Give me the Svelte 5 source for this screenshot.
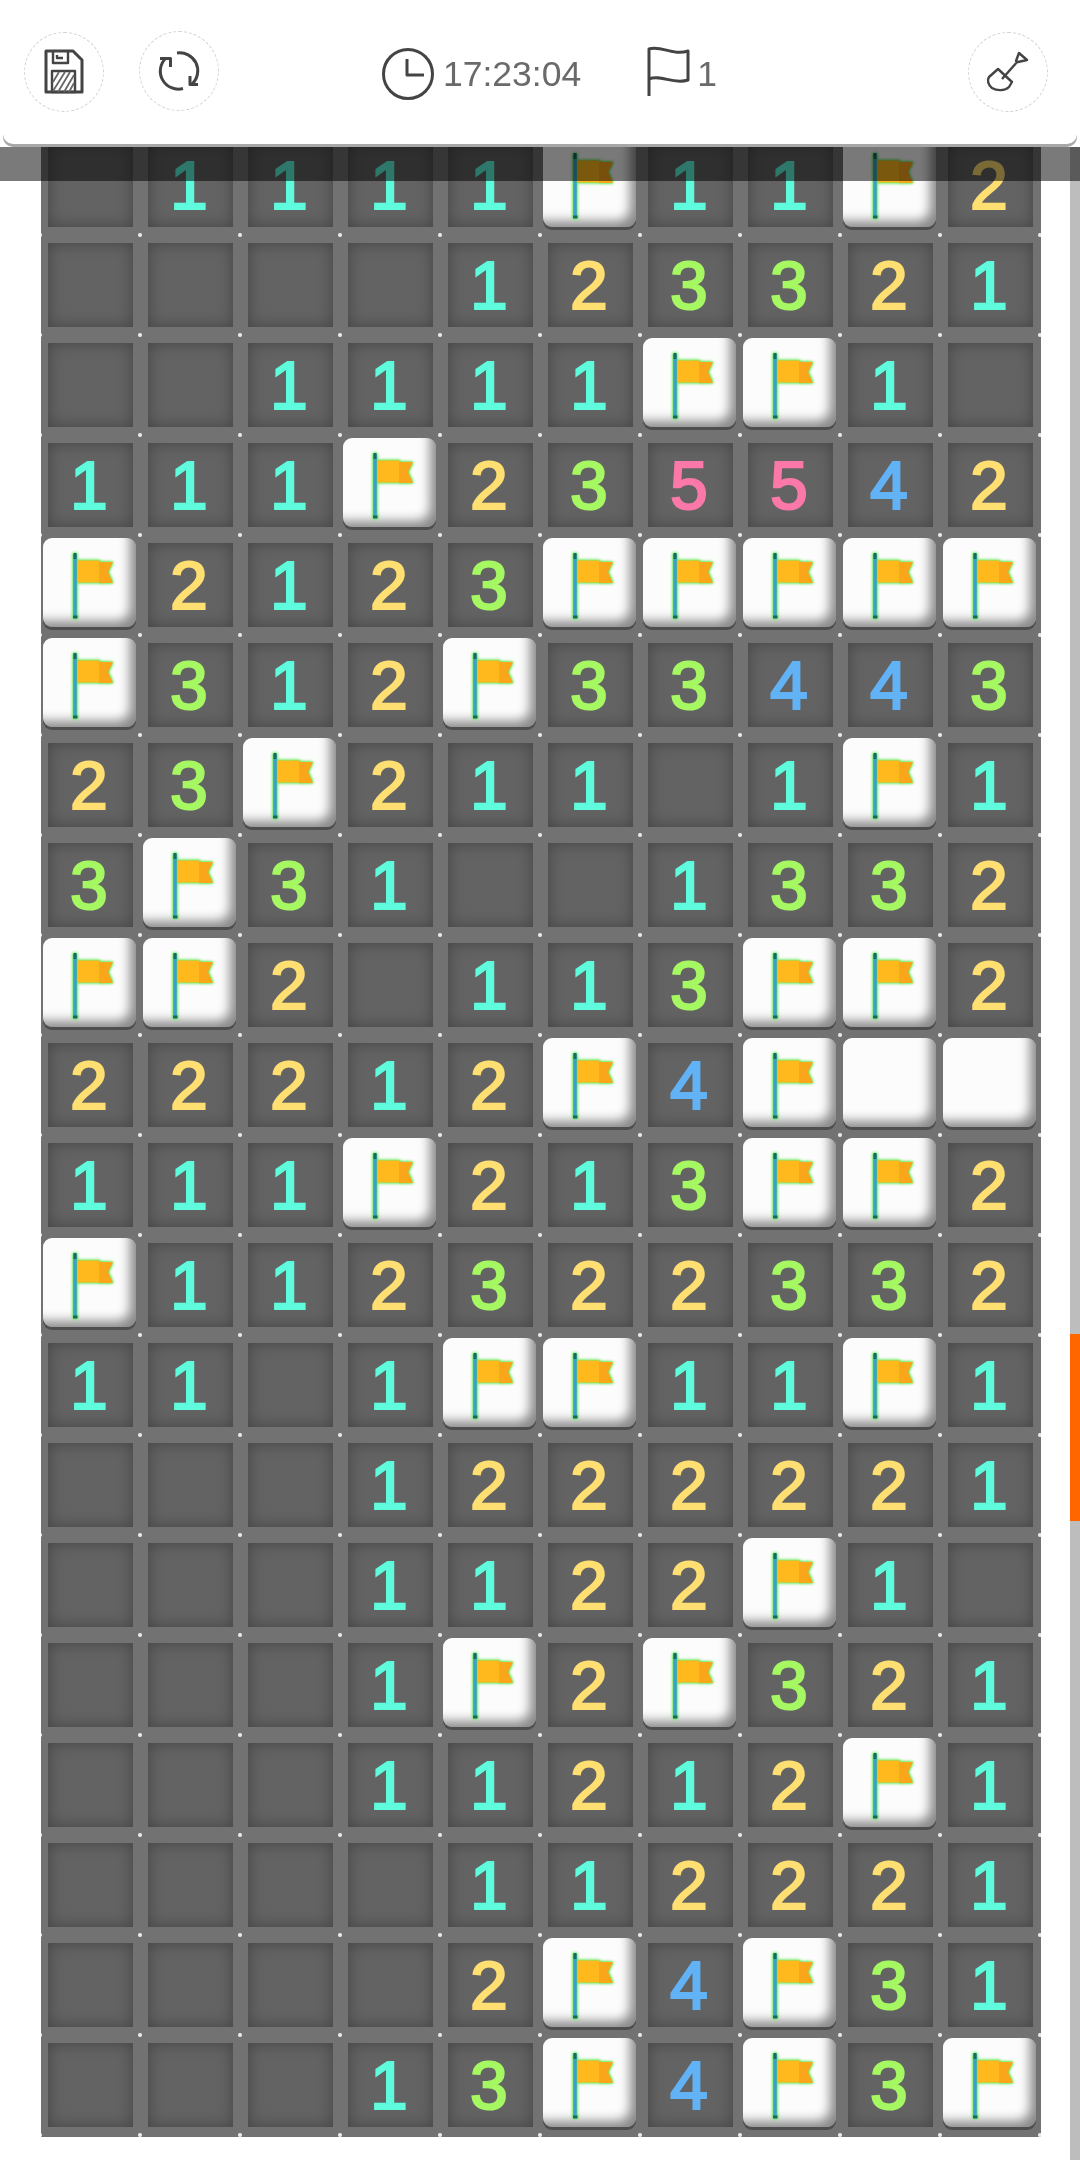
<script>
  const layout = [
    '.1111F11F2', '....123321', '..1111FF1.', '111F235542',
    'F2123FFFFF', 'F312F33443', '23F211.1F1', '3F31..1332', 'FF2.113FF2',
    '22212F4FWW', '111F213FF2', 'F112322332', '11.1FF11F1', '...1222221',
    '...1122F1.', '...1F2F321', '...11212F1', '....112221',
    '....2F4F31', '...13F4F3F'
  ];
  const rows = layout.map((r) => r.split(''));
</script>

<div class="page">
  <header class="bar">
    <button class="round" aria-label="Save">
      <svg width="40" height="46" viewBox="0 0 40 46">
        <path class="ink" d="M2 2H29L38 11V43H2Z"/>
        <path class="ink thin" d="M9 2V14H24V2M13 6V9H19"/>
        <rect class="ink thin" x="8" y="22" width="23" height="21"/>
        <path class="ink hair" d="M9 33L15 23M9 42L21 23M14 43L26 23M20 43L30 26M25 43L30 34"/>
      </svg>
    </button>
    <button class="round second" aria-label="Restart">
      <svg width="44" height="44" viewBox="0 0 44 44">
        <path class="ink" d="M20 4A18 18 0 0 1 35 35M26 39.5A18 18 0 0 1 9 9"/>
        <path class="ink" d="M33 27V35.5H41M3 9.5H13.5V18"/>
      </svg>
    </button>

    <div class="status">
      <svg class="clock" width="54" height="54" viewBox="0 0 54 54">
        <circle class="ink" cx="27" cy="27" r="24.5"/>
        <path class="ink" d="M26 12V28H43"/>
      </svg>
      <span class="time">17:23:04</span>
      <svg class="banner" width="46" height="52" viewBox="0 0 46 52">
        <path class="ink" d="M4 50V3C16 -1 28 10 43 5V34C28 39 16 28 4 33"/>
      </svg>
      <span class="count">1</span>
    </div>

    <button class="round tool" aria-label="Dig">
      <svg width="44" height="44" viewBox="0 0 44 44">
        <path class="ink thin" d="M16 29L32 11M30 11L33 3L41 10L32 12Z"/>
        <path class="ink thin" d="M12 19L26 32L23 37C19 41 11 41 6 38C2 35 1 30 3 27Z"/>
      </svg>
    </button>
  </header>
  <div class="shade"></div>
  <div class="track"><div class="thumb"></div></div>

  <main class="board">
    {#each rows as row}
      {#each row as cell}
        {#if cell === 'F' || cell === 'W'}
          <div class="cell">
            <div class="tile raised">
              {#if cell === 'F'}
                <svg class="flag" width="52" height="72" viewBox="0 0 52 72">
                  <path d="M11 7V71" stroke="#3e9fc6" stroke-width="3.5"/>
                  <path d="M9 70H13.5M11 6V12" stroke="#176a62" stroke-width="3"/>
                  <path d="M13 13.500H36V35.500H13Z" fill="#ffb91d"/>
                  <path d="M35 15H49L44 25L49 36H35Z" fill="#faa61a"/>
                </svg>
              {/if}
            </div>
          </div>
        {:else}
          <div class="cell">
            <div class="tile open n{cell}">{cell === '.' ? '' : cell}</div>
          </div>
        {/if}
      {/each}
    {/each}
  </main>
</div>

<style>
  :global(body) {
    margin: 0;
    background: #fff;
  }
  .page {
    position: relative;
    width: 1080px;
    height: 2160px;
    overflow: hidden;
    background: #fff;
    font-family: "Liberation Sans", Arial, sans-serif;
    filter: blur(0.6px);
  }
  .bar {
    position: absolute;
    z-index: 3;
    top: 0;
    left: 3px;
    width: 1074px;
    height: 144px;
    box-sizing: border-box;
    padding: 0 28px 0 21px;
    display: flex;
    align-items: center;
    background: #fff;
    border-radius: 0 0 10px 10px;
    box-shadow: 0 3px 0 #a8a8a8;
  }
  .round {
    width: 80px;
    height: 80px;
    padding: 0;
    flex: none;
    display: flex;
    align-items: center;
    justify-content: center;
    background: #fff;
    border: 1px dashed #d0d0d0;
    border-radius: 50%;
  }
  .second {
    margin-left: 35px;
    margin-top: -2px;
  }
  .tool {
    margin-left: auto;
    margin-right: 1px;
  }
  .status {
    margin-left: 162px;
    display: flex;
    align-items: center;
    color: #6a6a6a;
    font-size: 35.500px;
  }
  .clock {
    margin-top: 3px;
  }
  .time {
    margin-left: 8px;
    margin-top: 4px;
  }
  .banner {
    margin-left: 64px;
  }
  .count {
    margin-left: 6px;
    margin-top: 4px;
  }
  .ink {
    fill: none;
    stroke: #444;
    stroke-width: 3;
    stroke-linejoin: round;
  }
  .thin {
    stroke-width: 2.4;
  }
  .hair {
    stroke-width: 1.8;
    stroke: #666;
  }
  .shade {
    position: absolute;
    z-index: 2;
    top: 147px;
    left: 0;
    width: 100%;
    height: 34px;
    background: rgba(0, 0, 0, 0.52);
  }
  .track {
    position: absolute;
    z-index: 1;
    top: 147px;
    right: 0;
    width: 10px;
    bottom: 0;
    background: #bdbdbd;
  }
  .thumb {
    margin-top: 1187px;
    height: 187px;
    background: #ff6600;
  }
  .board {
    position: absolute;
    top: 137px;
    left: 41px;
    width: 1000px;
    height: 2000px;
    display: grid;
    grid-template-columns: repeat(10, 100px);
    grid-auto-rows: 100px;
    background-color: #727272;
    background-image: radial-gradient(circle, #e8e8e8 0 1.500px, transparent 2.500px);
    background-size: 100px 100px;
    background-position: 49px 48px;
  }
  .cell {
    position: relative;
  }
  .tile {
    box-sizing: border-box;
    display: flex;
    align-items: center;
    justify-content: center;
  }
  .open {
    width: 85px;
    height: 84px;
    margin: 6px 0 0 7px;
    padding-right: 3px;
    background: #636363;
    box-shadow: inset 0 0 16px rgba(0, 0, 0, 0.32);
    font-size: 68px;
    font-weight: 400;
    -webkit-text-stroke: 2.2px currentColor;
    line-height: 1;
  }
  .raised {
    width: 93px;
    height: 89px;
    margin: 1px 0 0 2px;
    background: #fcfcfc;
    border-radius: 9px;
    box-shadow:
      inset -10px -10px 11px -4px rgba(0, 0, 0, 0.45),
      0 3px 0 #4e4e4e;
  }
  .flag {
    filter: drop-shadow(0 0 1.5px #4fe044) drop-shadow(0 0 1px #7cf06a);
  }
  .n1 { color: #5ffbdd; }
  .n2 { color: #ffdf72; }
  .n3 { color: #a6f863; }
  .n4 { color: #62b2f6; }
  .n5 { color: #fb78a9; }
</style>
